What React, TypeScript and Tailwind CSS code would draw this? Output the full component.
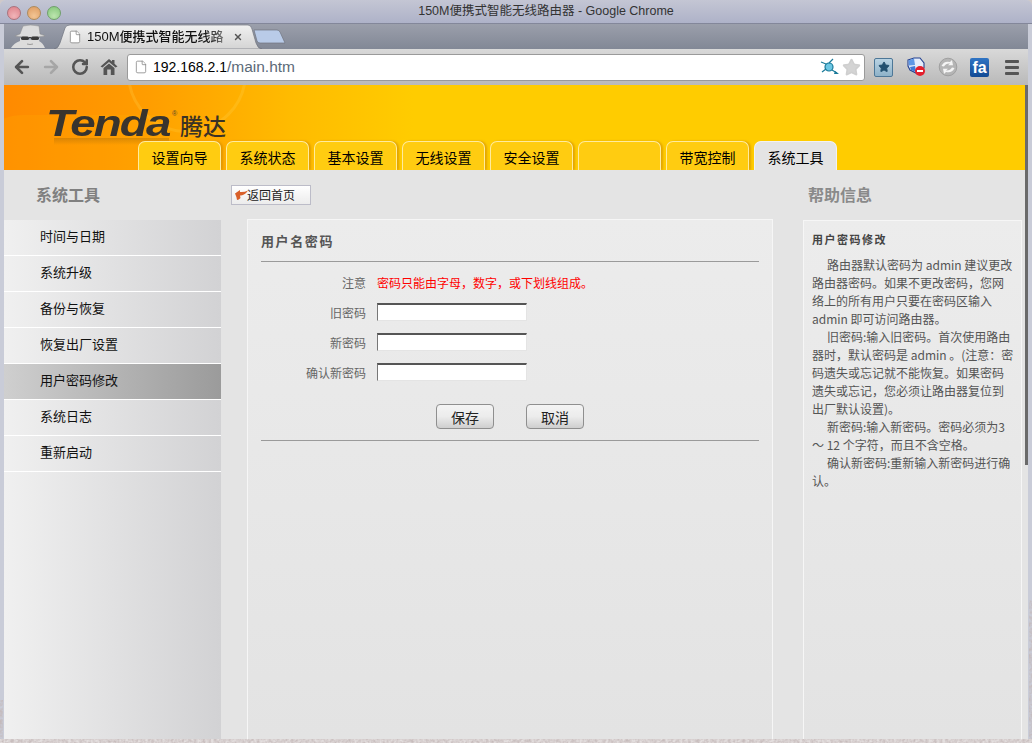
import React from "react";
import { ArrowLeft, ArrowRight, RotateCw, Star, File, X } from "lucide-react";

const CJK = "font-['Noto_Sans_CJK_SC','Liberation_Sans',sans-serif]";

const tabs = ["设置向导", "系统状态", "基本设置", "无线设置", "安全设置", "", "带宽控制", "系统工具"];
const menu = ["时间与日期", "系统升级", "备份与恢复", "恢复出厂设置", "用户密码修改", "系统日志", "重新启动"];

function Field({ label }: { label: string }) {
  return (
    <div className="flex items-center h-[30px]">
      <div className="w-[105px] pt-[2px] text-right text-[12px] text-[#666] leading-none">{label}</div>
      <input
        type="text"
        readOnly
        className="ml-[11px] w-[150px] h-[18px] bg-white border-t-2 border-l border-t-[#555] border-l-[#777] border-r border-b border-r-[#e4e4e4] border-b-[#e4e4e4] outline-none"
      />
    </div>
  );
}

function PageButton({ label }: { label: string }) {
  return (
    <button className="w-[58px] h-[25px] rounded-[4px] border border-[#8f8f8f] bg-gradient-to-b from-[#f4f4f4] via-[#ececec] to-[#cfcfcf] text-[14px] text-[#222] leading-none">
      {label}
    </button>
  );
}

export default function App() {
  return (
    <div className={`relative w-[1032px] h-[743px] overflow-hidden bg-[#cfc9c9] ${CJK}`}>
      <div className="h-[739px] flex flex-col rounded-t-[6px] overflow-hidden bg-[#c9ccd8]">
        {/* title bar */}
        <div className="relative h-[24px] shrink-0 border-b border-[#83879a] bg-gradient-to-b from-[#c4c6d4] to-[#aeb2c8] flex items-center justify-center pl-[60px]">
          <div className="absolute left-[7px] top-[6px] flex gap-[6px]">
            <span className="w-[14px] h-[14px] rounded-full border border-[#a9727c] bg-[radial-gradient(circle_at_50%_75%,#f0b4b8,#dd7f88)]" />
            <span className="w-[14px] h-[14px] rounded-full border border-[#ad8a5c] bg-[radial-gradient(circle_at_50%_75%,#f2c594,#dd9a5f)]" />
            <span className="w-[14px] h-[14px] rounded-full border border-[#6f9f6a] bg-[radial-gradient(circle_at_50%_75%,#bce5ae,#82c578)]" />
          </div>
          <span className="text-[12.5px] leading-none text-[#333] font-['Liberation_Sans','Noto_Sans_CJK_SC',sans-serif]">
            150M便携式智能无线路由器 - Google Chrome
          </span>
        </div>

        {/* tab strip */}
        <div className="relative h-[25px] shrink-0 ml-[4px] mr-[4px] bg-gradient-to-b from-[#9b9fab] to-[#828896] flex items-end">
          {/* incognito */}
          <svg className="absolute left-[6px] top-0" width="38" height="25" viewBox="0 0 38 25">
            <path d="M10 10 L13 2 Q20 0 29 2 L30 10 Q34 11 35 12 Q20 15 5 12 Q7 11 10 10Z" fill="#dcdcdc" stroke="#8a8a8a" strokeWidth=".5" />
            <path d="M1 24 Q4 19 10 17 L10 14 Q20 17 30 14 L29 17 Q33 19 35 24Z" fill="#dcdcdc" />
            <rect x="11" y="12.5" width="8" height="3.6" rx="1.7" fill="#3a3a3a" />
            <rect x="21" y="12.5" width="8" height="3.6" rx="1.7" fill="#3a3a3a" />
            <path d="M19 13.5h2" stroke="#3a3a3a" />
            <path d="M17 20 Q20 21 23 20" stroke="#999" fill="none" />
          </svg>
          {/* active tab */}
          <div className="absolute left-[50px] top-0 h-[25px] w-[208px]">
            <svg className="absolute inset-0" width="208" height="25" viewBox="0 0 208 25">
              <defs>
                <linearGradient id="tabfill" x1="0" y1="0" x2="0" y2="1">
                  <stop offset="0" stopColor="#f1f1f1" />
                  <stop offset="1" stopColor="#d4d4d4" />
                </linearGradient>
              </defs>
              <path d="M0 25 Q4 25 6 19 L11 4 Q12 1 16 1 L194 1 Q197 1 198 5 L202 19 Q204 25 208 25Z" fill="url(#tabfill)" stroke="#70747f" strokeWidth=".7" />
            </svg>
            <div className="absolute left-[14px] top-[5px] flex items-center">
              <File size={14} strokeWidth={1.2} className="text-[#777] fill-white" />
              <span className="ml-[5px] whitespace-nowrap text-[13px] leading-[16px] bg-gradient-to-r from-[#111] from-85% to-[#777] bg-clip-text text-transparent font-['Liberation_Sans','Noto_Sans_CJK_SC',sans-serif] font-medium">
                150M便携式智能无线路
              </span>
              <X size={10} strokeWidth={3.4} className="ml-[9px] text-[#555]" />
            </div>
          </div>
          {/* new tab */}
          <svg className="absolute left-[249px] top-[5px]" width="36" height="16" viewBox="0 0 36 16">
            <path d="M1 1 L24 1 Q26 1 27 3 L32 14 L7 14 Q5 14 4 12Z" fill="#b9cbe8" stroke="#70747f" strokeWidth=".7" />
          </svg>
        </div>

        {/* toolbar */}
        <div className="h-[36px] shrink-0 ml-[4px] mr-[4px] bg-gradient-to-b from-[#d9d9d9] to-[#b9b9b9] flex items-center">
          <ArrowLeft size={20} strokeWidth={3.2} className="ml-[8px] text-[#555]" />
          <ArrowRight size={20} strokeWidth={3.2} className="ml-[9px] text-[#a6a6a6]" />
          <RotateCw size={18} strokeWidth={3.4} className="ml-[10px] text-[#555]" />
          <svg className="ml-[11px]" width="18" height="18" viewBox="0 0 18 18">
            <path d="M9 1 L12 3.6 L12 2 L14.5 2 L14.5 5.8 L17.5 8.6 L15.5 9.4 L9 4 L2.5 9.4 L0.5 8.6Z M3.5 10 L9 5.4 L14.5 10 L14.5 17 L10.8 17 L10.8 11.5 L7.2 11.5 L7.2 17 L3.5 17Z" fill="#555" />
          </svg>
          <div className="ml-[9px] w-[738px] h-[27px] rounded-[3px] border border-[#9a9a9a] bg-white flex items-center relative">
            <File size={14} strokeWidth={1.2} className="ml-[6px] text-[#777] fill-white" />
            <span className="ml-[5px] leading-none font-['Liberation_Sans',sans-serif] whitespace-nowrap">
              <span className="text-black text-[14px] font-medium">192.168.2.1</span>
              <span className="text-[#5c6a78] text-[15.5px]">/main.htm</span>
            </span>
            <svg className="ml-auto" width="20" height="18" viewBox="0 0 20 18">
              <circle cx="9" cy="9" r="4" fill="#6cc7e4" stroke="#1b7a99" strokeWidth="1.2" />
              <path d="M9 5 L13 1 M6 11 L2 14 M6 6 L1 4 M12 12 L17 15" stroke="#1b7a99" strokeWidth="1.2" />
              <path d="M15 13 L19 16 L14 16Z" fill="#1b7a99" />
            </svg>
            <Star size={19} className="ml-[2px] mr-[3px] text-[#cfcfcf] fill-[#d4d4d4]" />
          </div>
          <div className="ml-[9px] w-[19px] h-[19px] rounded-[2px] border border-[#4d7797] bg-gradient-to-b from-[#b9d3e3] to-[#8fb2c8] flex items-center justify-center">
            <Star size={12} className="text-[#23506f] fill-[#23506f]" />
          </div>
          <svg className="ml-[14px]" width="20" height="20" viewBox="0 0 20 20">
            <path d="M1 3 L7 1 L13 1 L17 6 L17 11 L9 16 L3 13 L1 9Z" fill="#e4ecfa" stroke="#23408f" strokeWidth="1.1" />
            <path d="M1.5 3.5 L7 1.5 L8 8 L2 8.5Z" fill="#5d97e6" />
            <path d="M3 10 L8 9 L9 15 L4 13Z" fill="#3f78d6" />
            <circle cx="13" cy="14" r="5" fill="#e3202e" />
            <rect x="10" y="13" width="6" height="2" fill="#fff" />
          </svg>
          <svg className="ml-[11px]" width="20" height="20" viewBox="0 0 20 20">
            <circle cx="10" cy="10" r="8.8" fill="#b5b5b5" stroke="#a0a0a0" />
            <path d="M3.5 9 Q6 3.5 12 5 L14 3 L15 8.2 L10 8.2 L12 6.5 Q8 6 6 9.5Z M16.5 11 Q14 16.5 8 15 L6 17 L5 11.8 L10 11.8 L8 13.5 Q12 14 14 10.5Z" fill="#f5f5f5" />
          </svg>
          <div className="ml-[12px] w-[19px] h-[19px] rounded-[2px] bg-gradient-to-b from-[#2f74c4] to-[#124a94] flex items-end justify-center text-white text-[16px] font-bold leading-[18px] font-['Liberation_Sans',sans-serif]">
            fa
          </div>
          <div className="ml-[16px] w-[14px] flex flex-col gap-[3px]">
            <span className="h-[3px] bg-[#555] rounded-[1px]" />
            <span className="h-[3px] bg-[#555] rounded-[1px]" />
            <span className="h-[3px] bg-[#555] rounded-[1px]" />
          </div>
        </div>

        {/* page viewport */}
        <div className="flex-1 min-h-0 ml-[4px] mr-[4px] relative overflow-hidden bg-[#e4e4e4] flex flex-col">
          {/* yellow header */}
          <div className="relative h-[85px] shrink-0 overflow-hidden bg-[linear-gradient(90deg,#ff8a00_0%,#ff9d00_14%,#ffbb00_28%,#ffcc00_40%,#ffcc00_100%)]">
            <div className="absolute left-[123px] top-[-72px] w-[120px] h-[120px] rounded-full border-[3px] border-[#ffd24a]/25" />
            <div className="absolute left-[-40px] top-[30px] w-[260px] h-[120px] rounded-full bg-[#ffb400]/20" />
            <div className="absolute left-[42px] top-[19px] text-[36px] leading-[40px] font-bold italic tracking-[-1.5px] text-[#38342e] font-['Liberation_Sans',sans-serif] [transform:scaleX(1.27)] origin-left">
              Tenda
            </div>
            {/* faint reflection beneath the wordmark */}
            <div className="absolute left-[50px] top-[53px] w-[115px] h-[7px] bg-gradient-to-b from-[#6b4a10]/25 to-transparent" />
            <div className="absolute left-[168px] top-[25px] text-[7px] leading-none text-[#5a4a2a] font-['Liberation_Sans',sans-serif]">®</div>
            <div className="absolute left-[176px] top-[27px] text-[23px] leading-[27px] font-medium text-[#3a3226]">腾达</div>
            <div className="absolute bottom-0 left-[134px] flex gap-[5px] items-end">
              {tabs.map((t, i) => (
                <div
                  key={i}
                  className={
                    "w-[83px] h-[29px] rounded-t-[7px] flex items-center justify-center pt-[1px] text-[14px] leading-none text-black " +
                    (i === 7
                      ? "bg-[#e4e4e4] border border-b-0 border-[#f2f2f2]"
                      : "bg-[#ffcc11] border border-b-0 border-[#ffeb9e] shadow-[2px_0_2px_rgba(200,130,0,0.5)]")
                  }
                >
                  {t}
                </div>
              ))}
            </div>
          </div>

          {/* body */}
          <div className="flex-1 min-h-0 flex">
            {/* sidebar */}
            <div className="w-[217px] shrink-0 flex flex-col bg-gradient-to-r from-[#f0f0f0] to-[#d2d2d4]">
              <div className="h-[50px] pl-[32px] pb-[3px] flex items-center bg-[#e4e4e4] text-[16px] font-bold text-[#808080] leading-none">
                系统工具
              </div>
              {menu.map((m, i) => (
                <div
                  key={m}
                  className={
                    "h-[36px] pl-[36px] pb-[5px] flex items-center border-b border-white text-[13px] leading-none text-[#111] " +
                    (i === 4 ? "bg-gradient-to-r from-[#cfcfcf] to-[#9b9b9b]" : "")
                  }
                >
                  {m}
                </div>
              ))}
            </div>

            {/* content */}
            <div className="flex-1 min-w-0 flex flex-col pl-[10px] pt-[15px]">
              <div className="h-[20px] w-[80px] shrink-0 border border-[#bcbcc8] bg-gradient-to-b from-[#ffffff] to-[#ececec] flex items-center">
                <svg width="15" height="12" viewBox="0 0 15 12" className="ml-[2px] shrink-0">
                  <path d="M1 4.5 L6 1 L6 3 Q10 3.5 14 1.5 Q11 6 7 6.5 L6 6.5 L6.5 9 Q5 11 3 11 Q2.5 7.5 1 4.5Z" fill="#d9602a" />
                </svg>
                <span className="-ml-[2px] text-[12px] leading-none text-[#222]">返回首页</span>
              </div>

              <div className="flex-1 min-h-0 flex mt-[14px]">
                {/* form panel */}
                <div className="ml-[16px] w-[526px] border border-[#f6f6f6] border-b-0 bg-gradient-to-b from-[#ececec] to-[#e3e3e3] px-[13px] pt-[14px]">
                  <h2 className="text-[13px] font-bold leading-[14px] text-[#555] tracking-[1.6px]">用户名密码</h2>
                  <div className="mt-[13px] h-px bg-[#9a9a9a]" />
                  <div className="flex items-center h-[14px] mt-[14px] mb-[7px]">
                    <div className="w-[105px] text-right text-[12px] text-[#666] leading-none">注意</div>
                    <div className="ml-[11px] text-[12px] text-[#f00] leading-none whitespace-nowrap">
                      密码只能由字母，数字，或下划线组成。
                    </div>
                  </div>
                  <div>
                    <Field label="旧密码" />
                    <Field label="新密码" />
                    <Field label="确认新密码" />
                  </div>
                  <div className="flex mt-[17px] pl-[175px] gap-[32px]">
                    <PageButton label="保存" />
                    <PageButton label="取消" />
                  </div>
                  <div className="mt-[11px] h-px bg-[#9a9a9a]" />
                </div>
              </div>
            </div>

            {/* help column */}
            <div className="w-[225px] shrink-0 flex flex-col pr-[6px] relative">
              <div className="h-[50px] pl-[5px] pb-[3px] flex items-center text-[16px] font-bold text-[#8a8a8a] leading-none">
                帮助信息
              </div>
              <div className="flex-1 min-h-0 border border-[#f6f6f6] border-b-0 bg-gradient-to-b from-[#ececec] to-[#e3e3e3] pl-[8px] pr-[7px] pt-[11px] text-[12px] leading-[18px] text-[#555]">
                <h3 className="font-bold text-[11px] leading-[14px] text-[#444] tracking-[1.5px] mb-[10px]">用户密码修改</h3>
                <p className="indent-[15px]">路由器默认密码为 admin 建议更改路由器密码。如果不更改密码，您网络上的所有用户只要在密码区输入 admin 即可访问路由器。</p>
                <p className="indent-[15px]">旧密码:输入旧密码。首次使用路由器时，默认密码是 admin 。(注意：密码遗失或忘记就不能恢复。如果密码遗失或忘记，您必须让路由器复位到出厂默认设置)。</p>
                <p className="indent-[15px]">新密码:输入新密码。密码必须为3 ～ 12 个字符，而且不含空格。</p>
                <p className="indent-[15px]">确认新密码:重新输入新密码进行确认。</p>
              </div>
            </div>
          </div>

          {/* scrollbar thumb */}
          <div className="absolute right-0 top-0 w-[3px] h-[380px] bg-[#6a6a6a]" />
        </div>
      </div>
      {/* desktop noise along the lower and side edges */}
      <svg className="absolute left-0 top-0 pointer-events-none" width="1032" height="743">
        <filter id="noise" x="0" y="0" width="100%" height="100%">
          <feTurbulence type="fractalNoise" baseFrequency="0.35" numOctaves="2" seed="4" />
          <feColorMatrix values="0 0 0 0 0.55  0 0 0 0 0.48  0 0 0 0 0.48  1.6 0 0 0 -0.4" />
        </filter>
        <rect y="739" width="1032" height="4" fill="#e4dfdf" />
        <rect y="739" width="1032" height="4" filter="url(#noise)" />
        <rect y="700" width="3" height="39" filter="url(#noise)" />
        <rect x="1029" y="600" width="3" height="139" filter="url(#noise)" />
      </svg>
    </div>
  );
}
